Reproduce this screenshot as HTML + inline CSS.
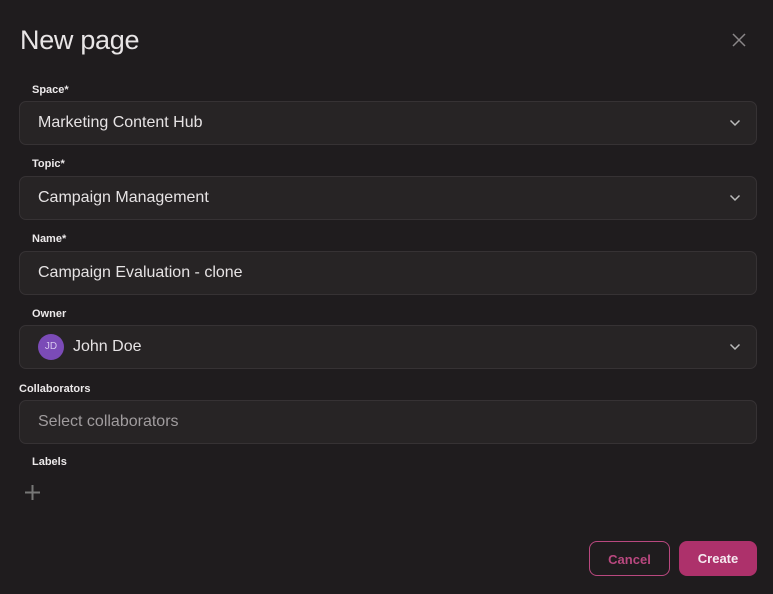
<!DOCTYPE html>
<html><head><style>
body{margin:0;width:773px;height:594px;background:#1f1c1e;font-family:"Liberation Sans",sans-serif;position:relative;overflow:hidden;color:#e6e3e4}
.t{position:absolute;left:20px;top:25px;font-size:27px;color:#e8e5e6;letter-spacing:-0.3px}
.x{position:absolute;left:731px;top:32px}
.l{position:absolute;font-size:11px;font-weight:bold;color:#ece9ea}
.f{position:absolute;left:19px;width:736px;height:42px;background:#272425;border:1px solid #363234;border-radius:7px}
.f span{position:absolute;left:18px;top:12px;font-size:16px;color:#e6e3e4}
.f svg{position:absolute;right:15px;top:17px}
.av{position:absolute;left:18px;top:8px;width:26px;height:26px;border-radius:50%;background:#7b4bb7;color:#d8c8f0;font-size:10px;text-align:center;line-height:26px}
.b{position:absolute;top:541px;height:35px;border-radius:8px;font-size:13px;font-weight:bold;text-align:center;line-height:35px;box-sizing:border-box}
</style></head><body>
<div class="t">New page</div>
<svg class="x" width="16" height="16" viewBox="0 0 16 16"><path d="M2 2L14 14M14 2L2 14" stroke="#8a8688" stroke-width="1.5"/></svg>
<div class="l" style="left:32px;top:84px">Space*</div>
<div class="f" style="top:101px"><span>Marketing Content Hub</span><svg width="12" height="8" viewBox="0 0 12 8"><path d="M1.5 1.5L6 6L10.5 1.5" stroke="#bbb" stroke-width="1.5" fill="none"/></svg></div>
<div class="l" style="left:32px;top:158px">Topic*</div>
<div class="f" style="top:176px"><span>Campaign Management</span><svg width="12" height="8" viewBox="0 0 12 8"><path d="M1.5 1.5L6 6L10.5 1.5" stroke="#bbb" stroke-width="1.5" fill="none"/></svg></div>
<div class="l" style="left:32px;top:233px">Name*</div>
<div class="f" style="top:251px"><span>Campaign Evaluation - clone</span></div>
<div class="l" style="left:32px;top:308px">Owner</div>
<div class="f" style="top:325px"><div class="av">JD</div><span style="left:53px">John Doe</span><svg width="12" height="8" viewBox="0 0 12 8"><path d="M1.5 1.5L6 6L10.5 1.5" stroke="#bbb" stroke-width="1.5" fill="none"/></svg></div>
<div class="l" style="left:19px;top:383px">Collaborators</div>
<div class="f" style="top:400px"><span style="color:#a09c9e">Select collaborators</span></div>
<div class="l" style="left:32px;top:456px">Labels</div>
<svg style="position:absolute;left:24px;top:484px" width="17" height="17" viewBox="0 0 17 17"><path d="M8.5 1V16M1 8.5H16" stroke="#777" stroke-width="2"/></svg>
<div class="b" style="left:589px;width:81px;border:1px solid #b9487f;color:#b9487f">Cancel</div>
<div class="b" style="left:679px;width:78px;background:#ad316b;color:#f5eaf0">Create</div>
</body></html>
